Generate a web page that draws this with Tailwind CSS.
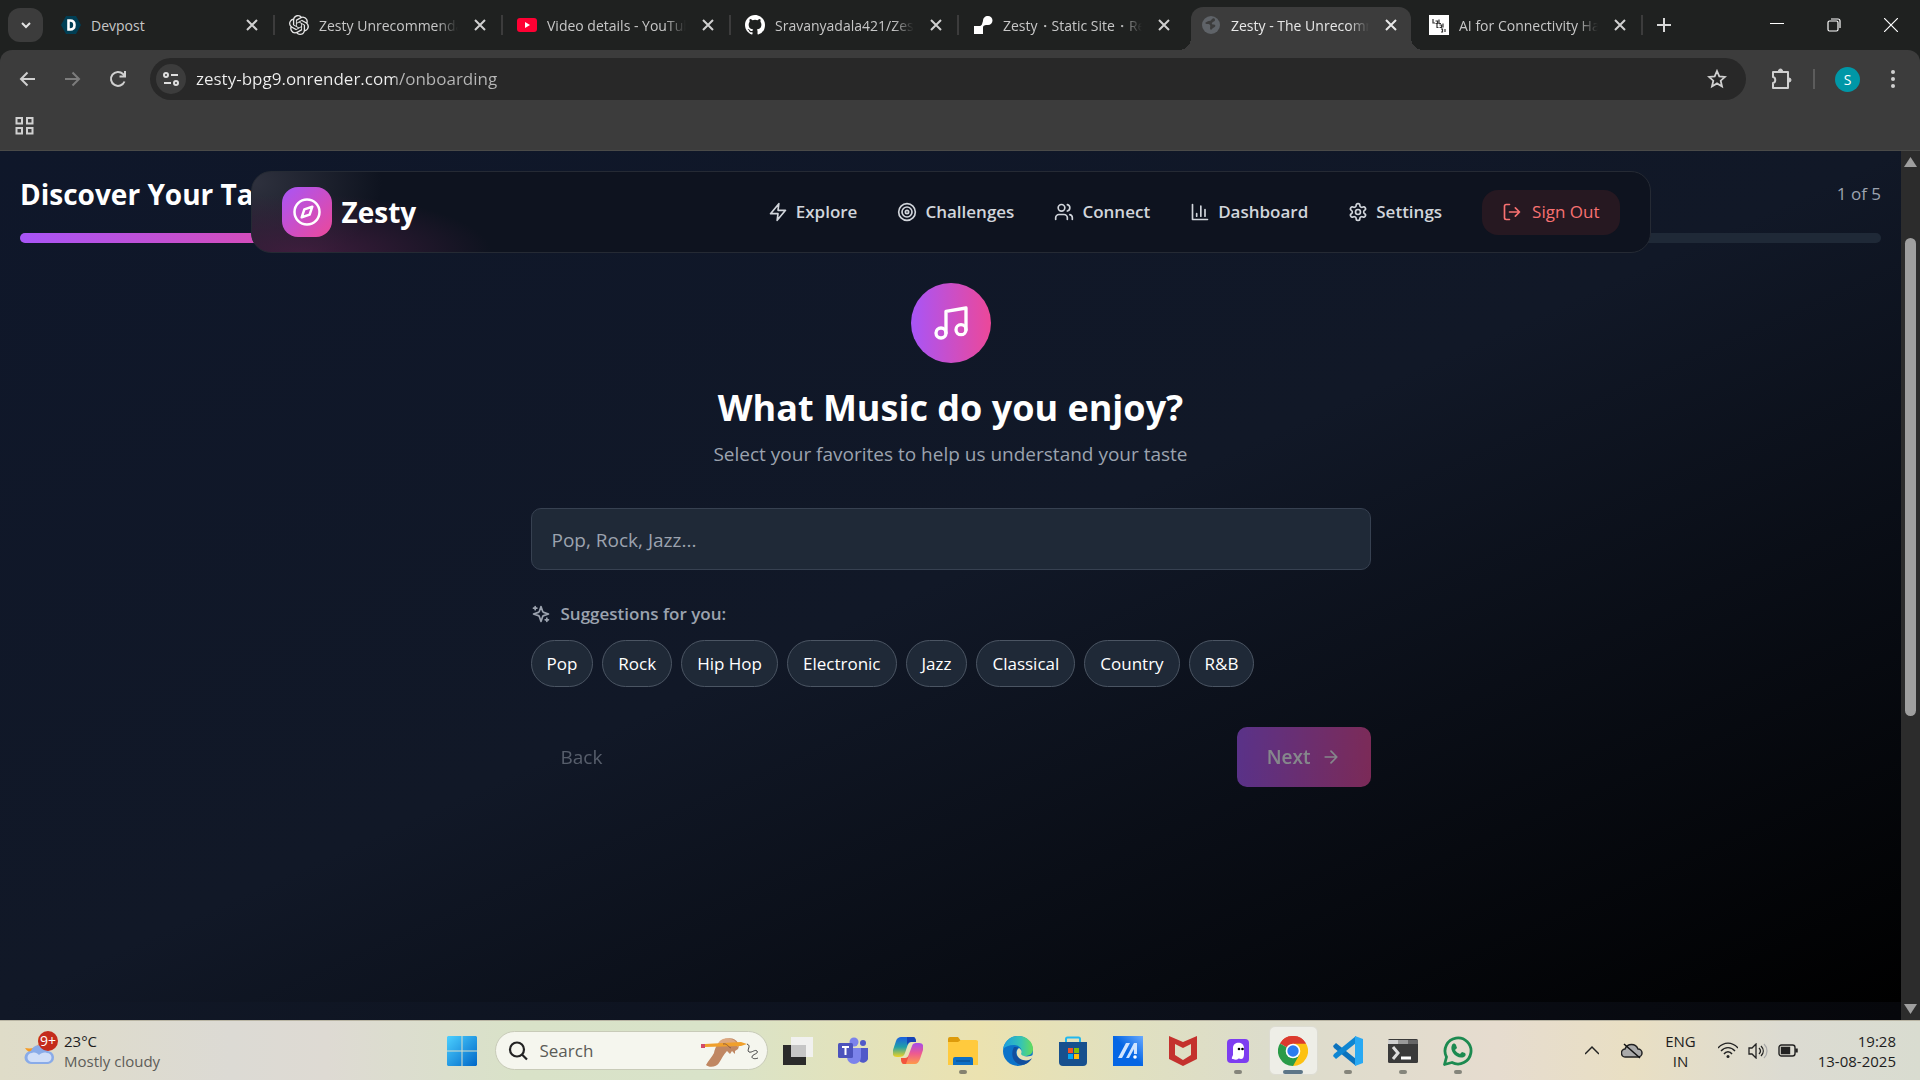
<!DOCTYPE html>
<html lang="en">
<head>
  <meta charset="UTF-8" />
  <meta name="viewport" content="width=device-width, initial-scale=1.0" />
  <title>Zesty - The Unrecommendation Engine</title>
  <script src="https://cdn.jsdelivr.net/npm/@tailwindcss/browser@4"></script>
</head>
<body class="min-h-screen flex flex-col bg-[#1f2120] font-['Open_Sans','Noto_Sans',sans-serif]">

  <!-- Tab strip -->
  <header class="flex h-[50px] shrink-0 items-center text-[14px] text-[#c7c7c7]">
    <button aria-label="Search tabs" class="ml-2 mr-1 grid h-[34px] w-[35px] shrink-0 place-items-center rounded-xl bg-[#3c3c3c]">
      <svg class="size-4" viewBox="0 0 16 16" fill="none" stroke="#e3e3e3" stroke-width="2"><path d="M4 6l4 4 4-4" /></svg>
    </button>

    <div class="grid h-full w-[1596px] min-w-0 shrink grid-cols-7 items-center">
      <div class="flex h-5 min-w-0 items-center border-r-2 border-[#3c3c3c] pl-[14px] pr-[15px]">
        <svg class="size-5 shrink-0" viewBox="0 0 20 20"><path d="M5 1h10l5 9-5 9H5L0 10z" fill="#003e54" /><path fill="none" stroke="#fff" stroke-width="2.6" d="M7.500 5.500v9h1.500c3 0 4.500-1.500 4.500-4.500S12 5.500 9 5.500z" /></svg>
        <span class="ml-[10px] flex-1 overflow-hidden whitespace-nowrap">Devpost</span>
        <button aria-label="Close Devpost" class="ml-4"><svg class="size-3" viewBox="0 0 12 12" stroke="#d0d0d0" stroke-width="2"><path d="M1 1l10 10M11 1L1 11" /></svg></button>
      </div>
      <div class="flex h-5 min-w-0 items-center border-r-2 border-[#3c3c3c] pl-[14px] pr-[15px]">
        <svg class="size-5 shrink-0" viewBox="0 0 24 24" fill="#e6e6e6"><path d="M22.280 9.820a5.980 5.980 0 0 0-.520-4.910 6.050 6.050 0 0 0-6.510-2.900A6.070 6.070 0 0 0 4.980 4.180a5.980 5.980 0 0 0-4 2.900 6.050 6.050 0 0 0 .740 7.100 5.980 5.980 0 0 0 .510 4.910 6.050 6.050 0 0 0 6.510 2.900A5.980 5.980 0 0 0 13.260 24a6.060 6.060 0 0 0 5.770-4.210 5.990 5.990 0 0 0 4-2.900 6.060 6.060 0 0 0-.750-7.070zm-9.020 12.610a4.480 4.480 0 0 1-2.880-1.040l.140-.080 4.780-2.760a.790.790 0 0 0 .390-.680v-6.740l2.020 1.170v5.620a4.500 4.500 0 0 1-4.450 4.510zm-9.660-4.130a4.470 4.470 0 0 1-.530-3.010l.140.080 4.780 2.760a.770.770 0 0 0 .780 0l5.840-3.370v2.370l-4.870 2.810a4.500 4.500 0 0 1-6.140-1.640zM2.340 7.900a4.480 4.480 0 0 1 2.370-1.980v5.680a.770.770 0 0 0 .390.680l5.810 3.350-2.020 1.170-4.830-2.790A4.500 4.500 0 0 1 2.340 7.900zm16.600 3.860l-5.830-3.390 2.010-1.160 4.830 2.790a4.490 4.490 0 0 1-.680 8.100v-5.680a.790.790 0 0 0-.330-.660zm2.010-3.020l-.140-.090-4.770-2.780a.780.780 0 0 0-.790 0L9.410 9.230V6.900l4.850-2.790a4.500 4.500 0 0 1 6.690 4.630zM8.310 12.860L6.290 11.700V6.070a4.500 4.500 0 0 1 7.380-3.450l-.140.080L8.750 5.460a.790.790 0 0 0-.390.680zm1.090-2.360L12 9l2.610 1.500v3L12 15l-2.610-1.500z" /></svg>
        <span class="ml-[10px] flex-1 overflow-hidden whitespace-nowrap mask-r-from-85% mask-r-to-100%">Zesty Unrecommendation</span>
        <button aria-label="Close Zesty Unrecommendation" class="ml-4"><svg class="size-3" viewBox="0 0 12 12" stroke="#d0d0d0" stroke-width="2"><path d="M1 1l10 10M11 1L1 11" /></svg></button>
      </div>
      <div class="flex h-5 min-w-0 items-center border-r-2 border-[#3c3c3c] pl-[14px] pr-[15px]">
        <svg class="size-5 shrink-0" viewBox="0 0 20 20"><rect y="3" width="20" height="14" rx="3" fill="#ff0033" /><path d="M8 7l5 3-5 3z" fill="#fff" /></svg>
        <span class="ml-[10px] flex-1 overflow-hidden whitespace-nowrap mask-r-from-85% mask-r-to-100%">Video details - YouTube</span>
        <button aria-label="Close Video details" class="ml-4"><svg class="size-3" viewBox="0 0 12 12" stroke="#d0d0d0" stroke-width="2"><path d="M1 1l10 10M11 1L1 11" /></svg></button>
      </div>
      <div class="flex h-5 min-w-0 items-center border-r-2 border-[#3c3c3c] pl-[14px] pr-[15px]">
        <svg class="size-5 shrink-0" viewBox="0 0 16 16" fill="#fff"><path d="M8 0C3.580 0 0 3.580 0 8c0 3.540 2.290 6.530 5.470 7.590.400.070.550-.170.550-.380v-1.490c-2.010.370-2.530-.490-2.690-.940-.090-.230-.480-.940-.820-1.130-.280-.150-.680-.520-.010-.530.630-.010 1.080.580 1.230.820.720 1.210 1.870.870 2.330.660.070-.520.280-.870.510-1.070-1.780-.200-3.640-.890-3.640-3.950 0-.870.310-1.590.820-2.150-.080-.200-.360-1.020.080-2.120 0 0 .670-.210 2.200.820a7.500 7.500 0 0 1 4 0c1.530-1.040 2.200-.820 2.200-.820.440 1.100.160 1.920.080 2.120.510.560.820 1.270.820 2.150 0 3.070-1.870 3.750-3.650 3.950.290.250.540.730.540 1.480v2.200c0 .210.150.460.550.380A8 8 0 0 0 16 8c0-4.420-3.580-8-8-8z" /></svg>
        <span class="ml-[10px] flex-1 overflow-hidden whitespace-nowrap mask-r-from-85% mask-r-to-100%">Sravanyadala421/Zesty</span>
        <button aria-label="Close Sravanyadala421" class="ml-4"><svg class="size-3" viewBox="0 0 12 12" stroke="#d0d0d0" stroke-width="2"><path d="M1 1l10 10M11 1L1 11" /></svg></button>
      </div>
      <div class="flex h-5 min-w-0 items-center pl-[14px] pr-[17px]">
        <svg class="size-5 shrink-0" viewBox="0 0 20 20" fill="#fff"><path d="M1 19V11h5c3 0 3-2 4-5 0-3 2-5 5-5a4 4 0 0 1 0 9c-3 0-5 0-5 3v6z" /></svg>
        <span class="ml-[10px] flex-1 overflow-hidden whitespace-nowrap mask-r-from-85% mask-r-to-100%">Zesty・Static Site・Render</span>
        <button aria-label="Close Zesty Static Site" class="ml-4"><svg class="size-3" viewBox="0 0 12 12" stroke="#d0d0d0" stroke-width="2"><path d="M1 1l10 10M11 1L1 11" /></svg></button>
      </div>
      <!-- Active tab -->
      <div class="relative mx-1 flex h-[43px] min-w-0 items-center self-end rounded-t-xl bg-[#3c3c3c] px-[10px] pb-[7px] text-[#e8e8e8]">
        <span class="absolute -left-3 bottom-0 size-3 bg-[radial-gradient(circle_at_0_0,transparent_12px,#3c3c3c_12px)]"></span>
        <span class="absolute -right-3 bottom-0 size-3 bg-[radial-gradient(circle_at_100%_0,transparent_12px,#3c3c3c_12px)]"></span>
        <svg class="size-5 shrink-0" viewBox="0 0 20 20"><circle cx="10" cy="10" r="9" fill="#5f6368" /><path d="M4 8c2 2 4 0 5 2s-1 3 1 5l2-2c2-1 3-2 2-3s-4 0-3-2 3-1 3-3-2-2-3-1-1 2-3 2-2 1-4 2z" fill="#3c3c3c" /></svg>
        <span class="ml-[10px] flex-1 overflow-hidden whitespace-nowrap mask-r-from-85% mask-r-to-100%">Zesty - The Unrecommendation</span>
        <button aria-label="Close Zesty" class="mr-1 ml-4"><svg class="size-3" viewBox="0 0 12 12" stroke="#e8e8e8" stroke-width="2"><path d="M1 1l10 10M11 1L1 11" /></svg></button>
      </div>
      <div class="flex h-5 min-w-0 items-center border-r-2 border-[#3c3c3c] pl-[14px] pr-[15px]">
        <svg class="size-5 shrink-0" viewBox="0 0 20 20"><path fill="#fff" d="M0 0h20v20H0z" /><path d="M4 4v4h2M6.500 6h2v2.500h-2M10 4.500v4h2M8 9v3.500h1.500M10.500 10h2v2.500h-2M14 8.500v4M12 14h1.500v3H12M16 14v3" stroke="#333" stroke-width="1.200" fill="none" /></svg>
        <span class="ml-[10px] flex-1 overflow-hidden whitespace-nowrap mask-r-from-85% mask-r-to-100%">AI for Connectivity Hackathon</span>
        <button aria-label="Close AI for Connectivity" class="ml-4"><svg class="size-3" viewBox="0 0 12 12" stroke="#d0d0d0" stroke-width="2"><path d="M1 1l10 10M11 1L1 11" /></svg></button>
      </div>
    </div>
    <button aria-label="New tab" class="ml-[14px] shrink-0"><svg class="size-[14px]" viewBox="0 0 14 14" stroke="#d8d8d8" stroke-width="2"><path d="M7 0v14M0 7h14" /></svg></button>

    <div class="ml-auto flex shrink-0 items-center gap-[43px] pr-[22px]">
      <button aria-label="Minimize"><svg class="size-[14px]" viewBox="0 0 14 14" stroke="#fff"><path d="M0 5.500h14" /></svg></button>
      <button aria-label="Restore"><svg class="size-[14px]" viewBox="0 0 14 14" fill="none" stroke="#fff" stroke-width="1.200"><rect x="1" y="3" width="10" height="10" rx="1.500" /><path d="M4 1h7a2 2 0 0 1 2 2v7" /></svg></button>
      <button aria-label="Close window"><svg class="size-[14px]" viewBox="0 0 14 14" stroke="#fff" stroke-width="1.200"><path d="M0 0l14 14M14 0L0 14" /></svg></button>
    </div>
  </header>

  <!-- Toolbar and bookmarks bar -->
  <div class="h-[101px] shrink-0 rounded-t-xl border-b border-[#4a4a48] bg-[#3c3c3c] pt-2">
    <div class="flex h-[42px] items-center">
      <div class="flex w-[150px] shrink-0 items-center gap-[25px] pl-[18px]">
        <button aria-label="Back"><svg class="size-5" viewBox="0 0 20 20" fill="none" stroke="#d0d0d0" stroke-width="2"><path d="M17 10H3M9.500 3.500L3 10l6.500 6.500" /></svg></button>
        <button aria-label="Forward"><svg class="size-5" viewBox="0 0 20 20" fill="none" stroke="#7c7c7c" stroke-width="2"><path d="M2 10h14M9.500 3.500L16 10l-6.500 6.500" /></svg></button>
        <button aria-label="Reload"><svg class="size-5" viewBox="0 0 20 20" fill="none" stroke="#d0d0d0" stroke-width="2"><path d="M16.500 12.500a7 7 0 1 1-1.500-7.500l2 2M17 2v5.500h-5.500" /></svg></button>
      </div>
      <div class="flex h-full min-w-0 flex-1 items-center rounded-full bg-[#282828] pl-[6px] pr-[19px]">
        <button aria-label="View site information" class="grid size-[30px] shrink-0 place-items-center rounded-full bg-[#3c3c3c]">
          <svg class="size-[18px]" viewBox="0 0 18 18" fill="none" stroke="#dedede" stroke-width="2"><circle cx="4" cy="5" r="2" /><path d="M9 5h7M2 13h7" /><circle cx="14" cy="13" r="2" /></svg>
        </button>
        <input aria-label="Address" type="text" value="zesty-bpg9.onrender.com/onboarding" class="ml-[10px] min-w-0 flex-1 bg-linear-to-r from-[#f0f0f0] from-[199px] to-[#b8b8b8] to-[199px] bg-clip-text text-[17px] text-transparent outline-none" />
        <button aria-label="Bookmark this tab"><svg class="size-5" viewBox="0 0 20 20" fill="none" stroke="#d0d0d0" stroke-width="1.800"><path d="M10 2l2.300 5.400 5.700.500-4.300 3.800 1.300 5.700-5-3-5 3 1.300-5.700L2 7.900l5.700-.500z" /></svg></button>
      </div>
      <div class="flex w-[174px] shrink-0 items-center pl-[23px]">
        <button aria-label="Extensions"><svg class="size-6" viewBox="0 0 24 24" fill="none" stroke="#d0d0d0" stroke-width="2"><path d="M4 5h15v16H4v-5c3-.500 3-5.500 0-6z" stroke-linejoin="round" /><path d="M9.500 4a2 2 0 0 1 4 0zM20 11a2 2 0 0 1 0 4z" fill="#d0d0d0" stroke-width="1" /></svg></button>
        <span class="ml-5 h-5 w-[2px] bg-[#5c5c5c]"></span>
        <button aria-label="Profile" class="ml-5 grid size-[25px] place-items-center rounded-full bg-[#0097a7] text-[14px] text-white">S</button>
        <button aria-label="Menu" class="ml-[23px]"><svg class="size-5" viewBox="0 0 20 20" fill="#d0d0d0"><circle cx="10" cy="3" r="2" /><circle cx="10" cy="10" r="2" /><circle cx="10" cy="17" r="2" /></svg></button>
      </div>
    </div>
    <button aria-label="Apps" class="mt-4 ml-[15px] block"><svg class="size-[19px]" viewBox="0 0 19 19" fill="none" stroke="#d0d0d0" stroke-width="2"><path d="M1.500 2h5.500v5.500H1.500zM12 2h5.500v5.500H12zM1.500 12h5.500v5.500H1.500zM12 12h5.500v5.500H12z" /></svg></button>
  </div>

  <!-- Page -->
  <div class="flex flex-1">
    <div class="relative flex min-w-0 flex-1 flex-col bg-linear-to-r/srgb from-[#111827] via-[#0d121e] to-[#06070b]">
      <main class="flex-1 bg-linear-to-br/srgb from-[#0f172a] via-[#111827] to-black px-5 pt-[23px] pb-[215px]">
        <div class="flex h-10 items-center justify-between">
          <h2 class="text-[28px] font-bold text-white">Discover Your Taste</h2>
          <span class="text-[17px] text-[#9ca3af]">1 of 5</span>
        </div>
        <div class="mt-[19px] h-[10px] rounded-full bg-[#1f2937]">
          <div class="h-full rounded-full bg-linear-to-r/srgb from-[#a855f7] to-[#ec4899]" style="width: 20%"></div>
        </div>

        <section class="mx-auto mt-10 max-w-[840px]">
          <div class="mx-auto grid size-20 place-items-center rounded-full bg-linear-to-r/srgb from-[#a855f7] to-[#ec4899]">
            <svg class="size-10" viewBox="0 0 24 24" fill="none" stroke="#fff" stroke-width="2" stroke-linecap="round" stroke-linejoin="round"><path d="M9 18V5l12-2v13" /><circle cx="6" cy="18" r="3" /><circle cx="18" cy="16" r="3" /></svg>
          </div>
          <h1 class="mt-[22px] text-center text-[36px] leading-[46px] font-bold text-white">What Music do you enjoy?</h1>
          <p class="mt-2 text-center text-[19px] leading-[30px] text-[#9ca3af]">Select your favorites to help us understand your taste</p>

          <input aria-label="Music you enjoy" type="text" placeholder="Pop, Rock, Jazz..." class="mt-[39px] block h-[62px] w-full rounded-[10px] border border-[#374151] bg-[#1f2937] px-5 pt-[2px] text-[19px] text-white placeholder:text-[#9ca3af]" />

          <div class="mt-[31px] flex items-center gap-[10px] text-[#9ca3af]">
            <svg class="size-5" viewBox="0 0 24 24" fill="none" stroke="currentColor" stroke-width="2" stroke-linecap="round" stroke-linejoin="round"><path d="m12 3-1.912 5.813a2 2 0 0 1-1.275 1.275L3 12l5.813 1.912a2 2 0 0 1 1.275 1.275L12 21l1.912-5.813a2 2 0 0 1 1.275-1.275L21 12l-5.813-1.912a2 2 0 0 1-1.275-1.275L12 3Z" /><path d="M5 3v4M19 17v4M3 5h4M17 19h4" /></svg>
            <span class="text-[17px] leading-[26px] font-semibold">Suggestions for you:</span>
          </div>
          <div class="mt-[13px] flex flex-wrap gap-[9px] text-[17px] text-white">
            <button class="h-[47px] rounded-full border border-[#4b5563] bg-[#1f2937] px-[15px]">Pop</button>
            <button class="h-[47px] rounded-full border border-[#4b5563] bg-[#1f2937] px-[15px]">Rock</button>
            <button class="h-[47px] rounded-full border border-[#4b5563] bg-[#1f2937] px-[15px]">Hip Hop</button>
            <button class="h-[47px] rounded-full border border-[#4b5563] bg-[#1f2937] px-[15px]">Electronic</button>
            <button class="h-[47px] rounded-full border border-[#4b5563] bg-[#1f2937] px-[15px]">Jazz</button>
            <button class="h-[47px] rounded-full border border-[#4b5563] bg-[#1f2937] px-[15px]">Classical</button>
            <button class="h-[47px] rounded-full border border-[#4b5563] bg-[#1f2937] px-[15px]">Country</button>
            <button class="h-[47px] rounded-full border border-[#4b5563] bg-[#1f2937] px-[15px]">R&amp;B</button>
          </div>

          <div class="mt-10 flex h-[60px] items-center justify-between text-[19px]">
            <button disabled class="px-[30px] text-[#9ca3af] opacity-50">Back</button>
            <button disabled class="flex h-full items-center gap-[10px] rounded-[10px] bg-linear-to-r/srgb from-[#a855f7] to-[#ec4899] px-[30px] font-semibold text-white opacity-50">
              Next
              <svg class="size-5" viewBox="0 0 24 24" fill="none" stroke="currentColor" stroke-width="2" stroke-linecap="round" stroke-linejoin="round"><path d="M5 12h14M12 5l7 7-7 7" /></svg>
            </button>
          </div>
        </section>
      </main>
      <div class="h-[18px]"></div>

      <nav class="absolute inset-x-0 top-5 mx-auto flex h-[82px] max-w-[1400px] items-center justify-between rounded-[20px] border border-[#252a34] bg-[#0e131f] bg-[radial-gradient(ellipse_190px_60px_at_50px_82px,#4a1f44cc,transparent),radial-gradient(ellipse_130px_90px_at_0_10px,#373946cc,transparent)] px-[30px] text-[17px] font-semibold text-[#d1d5db]">
        <a href="#" class="flex items-center gap-[10px] text-[28px] font-bold text-white">
          <span class="grid size-[50px] place-items-center rounded-2xl bg-linear-to-br/srgb from-[#a855f7] to-[#ec4899]">
            <svg class="size-[30px]" viewBox="0 0 24 24" fill="none" stroke="#fff" stroke-width="2" stroke-linecap="round" stroke-linejoin="round"><circle cx="12" cy="12" r="10" /><path d="M16.240 7.760l-2.120 6.360-6.360 2.120 2.120-6.360z" /></svg>
          </span>
          Zesty
        </a>
        <div class="flex items-center gap-10">
          <a href="#" class="flex items-center gap-2">
            <svg class="size-5" viewBox="0 0 24 24" fill="none" stroke="currentColor" stroke-width="2" stroke-linecap="round" stroke-linejoin="round"><path d="M13 2L3 14h9l-1 8 10-12h-9z" /></svg>
            Explore
          </a>
          <a href="#" class="flex items-center gap-2">
            <svg class="size-5" viewBox="0 0 24 24" fill="none" stroke="currentColor" stroke-width="2"><circle cx="12" cy="12" r="10" /><circle cx="12" cy="12" r="6" /><circle cx="12" cy="12" r="2" /></svg>
            Challenges
          </a>
          <a href="#" class="flex items-center gap-2">
            <svg class="size-5" viewBox="0 0 24 24" fill="none" stroke="currentColor" stroke-width="2" stroke-linecap="round" stroke-linejoin="round"><path d="M16 21v-2a4 4 0 0 0-4-4H6a4 4 0 0 0-4 4v2" /><circle cx="9" cy="7" r="4" /><path d="M22 21v-2a4 4 0 0 0-3-3.870M16 3.130a4 4 0 0 1 0 7.750" /></svg>
            Connect
          </a>
          <a href="#" class="flex items-center gap-2">
            <svg class="size-5" viewBox="0 0 24 24" fill="none" stroke="currentColor" stroke-width="2" stroke-linecap="round" stroke-linejoin="round"><path d="M3 3v18h18M18 17V9M13 17V5M8 17v-3" /></svg>
            Dashboard
          </a>
          <a href="#" class="flex items-center gap-2">
            <svg class="size-5" viewBox="0 0 24 24" fill="none" stroke="currentColor" stroke-width="2" stroke-linecap="round" stroke-linejoin="round"><path d="M12.220 2h-.440a2 2 0 0 0-2 2v.180a2 2 0 0 1-1 1.730l-.430.250a2 2 0 0 1-2 0l-.150-.080a2 2 0 0 0-2.730.730l-.220.380a2 2 0 0 0 .730 2.730l.150.100a2 2 0 0 1 1 1.720v.510a2 2 0 0 1-1 1.740l-.150.090a2 2 0 0 0-.730 2.730l.220.380a2 2 0 0 0 2.730.730l.150-.080a2 2 0 0 1 2 0l.430.250a2 2 0 0 1 1 1.730V20a2 2 0 0 0 2 2h.440a2 2 0 0 0 2-2v-.180a2 2 0 0 1 1-1.730l.430-.250a2 2 0 0 1 2 0l.150.080a2 2 0 0 0 2.730-.730l.220-.390a2 2 0 0 0-.730-2.730l-.150-.080a2 2 0 0 1-1-1.740v-.500a2 2 0 0 1 1-1.740l.150-.090a2 2 0 0 0 .730-2.730l-.220-.380a2 2 0 0 0-2.730-.730l-.150.080a2 2 0 0 1-2 0l-.430-.250a2 2 0 0 1-1-1.730V4a2 2 0 0 0-2-2z" /><circle cx="12" cy="12" r="3" /></svg>
            Settings
          </a>
          <button class="flex h-[45px] items-center gap-[10px] rounded-2xl bg-[#261821] px-5 font-normal text-[#f87171]">
            <svg class="size-5" viewBox="0 0 24 24" fill="none" stroke="currentColor" stroke-width="2" stroke-linecap="round" stroke-linejoin="round"><path d="M9 21H5a2 2 0 0 1-2-2V5a2 2 0 0 1 2-2h4M16 17l5-5-5-5M21 12H9" /></svg>
            Sign Out
          </button>
        </div>
      </nav>
    </div>

    <!-- Scrollbar -->
    <div class="flex w-[19px] shrink-0 flex-col items-center bg-[#2c2c2c] py-[6px]">
      <svg class="h-[10px] w-[13px]" viewBox="0 0 13 10" fill="#9f9f9f"><path d="M6.500 0L13 10H0z" /></svg>
      <div class="mt-[71px] h-[478px] w-[11px] rounded-full bg-[#9f9f9f]"></div>
      <svg class="mt-auto h-[10px] w-[13px]" viewBox="0 0 13 10" fill="#9f9f9f"><path d="M0 0h13L6.500 10z" /></svg>
    </div>
  </div>

  <!-- Taskbar -->
  <footer class="grid h-[60px] shrink-0 grid-cols-[1fr_auto_1fr] items-center border-t border-[#b9b5a4] bg-[linear-gradient(90deg,#dfdcc8_0%,#dcdad4_12%,#dedad3_17%,#d9e2c8_27%,#d9e3c9_37%,#ebe2b0_51%,#e0e0c0_59%,#dcdccb_66%,#e6dccf_78%,#e9dfc3_85%,#dcdbd2_93%,#d9dcd0_100%)] text-[15px] leading-5 text-[#1d1d1d]">
    <div class="flex items-center gap-2 pl-6">
      <div class="relative size-8">
        <svg class="size-8" viewBox="0 0 32 32"><path d="M14 1c4 9-3 14-13 12 3 5 8 6 14 3z" fill="#f59a23" /><path d="M7 29a6.500 6.500 0 0 1 0-13 8.500 8.500 0 0 1 16 0 6.500 6.500 0 0 1 1 13z" fill="#89abe8" /><path d="M8 27a4.500 4.500 0 0 1 0-9c3-1 5 0 7 2 2-2 5-3 8-2a4.500 4.500 0 0 1 0 9z" fill="#d0def8" /></svg>
        <span class="absolute -top-1 left-[14px] grid size-5 place-items-center rounded-full bg-[#c42b1c] text-[14px] text-white">9+</span>
      </div>
      <div>
        <div>23°C</div>
        <div class="text-[#5d5d58]">Mostly cloudy</div>
      </div>
    </div>

    <div class="flex h-full items-center">
      <button aria-label="Start" class="grid w-[54px] place-items-center">
        <svg class="size-[30px]" viewBox="0 0 30 30"><defs><linearGradient id="win" x2="1" y2="1"><stop stop-color="#4cd0ff" /><stop offset="1" stop-color="#0067c8" /></linearGradient></defs><path d="M1 0h13.500v14.500H0V1zM15.500 0H29l1 1v13.500H15.500zM0 15.500h14.500V30H1l-1-1zM15.500 15.500H30V29l-1 1H15.500z" fill="url(#win)" /></svg>
      </button>
      <label class="ml-[6px] mr-[3px] flex h-[39px] w-[273px] items-center rounded-full border border-[#c8cbb8] bg-[#f5f6ee] pl-3 pr-2">
        <svg class="size-5 shrink-0" viewBox="0 0 20 20" fill="none" stroke="#222" stroke-width="2.200"><circle cx="9" cy="8.500" r="7" /><path d="M14 13.500l5 5" /></svg>
        <input aria-label="Search" type="text" placeholder="Search" class="ml-3 w-0 flex-1 bg-transparent text-[17px] outline-none placeholder:text-[#5b5b57]" />
        <svg class="h-[32px] w-[58px] shrink-0" viewBox="0 0 58 32"><path d="M5 30c2-4 6-8 8-12 1-6 5-13 11-14 6-2 11 0 13 4 1 2 1 4 0 6l-3 2 0 3-3-3-2 3-3-3c-3 3-5 7-8 12-2 4-10 5-13 2z" fill="#c08762" /><path d="M17 9c2-5 8-7 13-5 4 1 7 4 7 8l-4-3-4 2-5-3z" fill="#dda981" /><path d="M4 9l36-2 6 2-6 2-36 1z" fill="#f0a02c" /><path d="M0 9h4v4H0z" fill="#d24b68" /><path d="M22 9c4-1 5 3 8 4" stroke="#8f5b3d" fill="none" /><path d="M46 9c5 2-1 6 2 8 3 1 6-3 8-1 2 3-5 3-5 6 0 2 4 2 6 1" fill="none" stroke="#444" /></svg>
      </label>

      <button aria-label="Task view" class="grid w-[55px] place-items-center"><svg class="size-[30px]" viewBox="0 0 30 30"><path d="M0 9h23v20H0z" fill="#2b2b2b" /><path d="M8 1h22v20H8z" fill="#f1f1ef" /><path d="M8 9h15v12H8z" fill="#c6c6c6" /></svg></button>
      <button aria-label="Teams" class="grid w-[55px] place-items-center"><svg class="size-[30px]" viewBox="0 0 30 30"><circle cx="16" cy="6" r="4.500" fill="#7b83eb" /><circle cx="25" cy="7" r="3" fill="#5059c9" /><path d="M20 12h10v8a5 5 0 0 1-10 3z" fill="#5059c9" /><path d="M9 12h14v9a7 7 0 0 1-14 0z" fill="#7b83eb" /><rect y="7" width="15" height="15" rx="1.500" fill="#4b53bc" /><path d="M4 11h7M7.500 11v8" stroke="#fff" stroke-width="2" /></svg></button>
      <button aria-label="Copilot" class="grid w-[55px] place-items-center"><svg class="size-[30px]" viewBox="0 0 30 30"><defs><linearGradient id="cpa" x2="0" y2="1"><stop stop-color="#1b5fe0" /><stop offset=".5" stop-color="#21a0a8" /><stop offset="1" stop-color="#f2d322" /></linearGradient><linearGradient id="cpb" x2="0" y2="1"><stop stop-color="#a54bea" /><stop offset=".5" stop-color="#ee5a90" /><stop offset="1" stop-color="#ff9a4a" /></linearGradient></defs><path d="M8 1h12c2 0 3 2 3 5h-5c-2 0-3 2-4 5l-2 6c-1 3-3 4-6 4H4c-4 0-5-3-4-7L3 5c1-3 3-4 5-4z" fill="url(#cpa)" /><path d="M14 1h6c2 0 3 2 3 5h-5c-2 0-3 1-4 3z" fill="#1743b5" /><path d="M22 28H11c-2 0-3-2-3-6h4c2 0 3-1 4-4l3-8c1-3 3-3 5-3h2c4 0 5 3 4 7l-3 9c-1 3-3 5-5 5z" fill="url(#cpb)" /><path d="M8 22h5c1 0 2-1 3-3l-3 9h-2c-2 0-3-2-3-6z" fill="#f2543c" /></svg></button>
      <button aria-label="File Explorer" class="relative grid h-full w-[55px] place-items-center"><svg class="size-[30px]" viewBox="0 0 30 30"><path d="M0 3a2 2 0 0 1 2-2h8l3 4h15a2 2 0 0 1 2 2H0z" fill="#dd9b0b" /><path d="M0 6h10l3-2h15a2 2 0 0 1 2 2v23H0z" fill="#ffca3d" /><path d="M5 29v-6a2 2 0 0 1 2-2h16a2 2 0 0 1 2 2v6z" fill="#0e6fc4" /><path d="M8 25h14" stroke="#0a4a86" /></svg><span class="absolute bottom-[6px] h-1 w-2 rounded-full bg-[#85826f]"></span></button>
      <button aria-label="Edge" class="grid w-[55px] place-items-center"><svg class="size-[30px]" viewBox="0 0 30 30"><defs><linearGradient id="edg"><stop stop-color="#1c9de0" /><stop offset=".6" stop-color="#36c4b4" /><stop offset="1" stop-color="#66dd58" /></linearGradient></defs><circle cx="15" cy="15" r="15" fill="#0c73c9" /><path d="M0 13C2 4 8 0 15 0c9 0 15 6 15 13 0 5-4 7-8 7-3 0-5-1-4-3 2-4-2-8-7-8S2 11 0 13z" fill="url(#edg)" /><path d="M11 11c-4 8-1 16 7 18 5 0 9-3 11-7-5 3-15 2-16-5 0-3 1-5 3-5-2-1-4-1-5-1z" fill="#124f9e" /><path d="M16 12c-4 3-3 10 4 12 4 1 7 0 9-2l1-3c-3 2-11 2-12-1 1-2 1-4-2-6z" fill="#e6e1b6" /></svg></button>
      <button aria-label="Microsoft Store" class="grid w-[55px] place-items-center"><svg class="size-[30px]" viewBox="0 0 30 30"><path d="M8 7V3a1.500 1.500 0 0 1 1.500-1.500h11A1.500 1.500 0 0 1 22 3v4" stroke="#22b8ee" stroke-width="2" fill="none" /><path d="M1 6h28v20a4 4 0 0 1-4 4H5a4 4 0 0 1-4-4z" fill="#17508e" /><path d="M10 12h5v5h-5z" fill="#f35325" /><path d="M16 12h5v5h-5z" fill="#81bc06" /><path d="M10 18h5v5h-5z" fill="#05a6f0" /><path d="M16 18h5v5h-5z" fill="#ffba08" /></svg></button>
      <button aria-label="MyASUS" class="grid w-[55px] place-items-center"><svg class="size-[30px]" viewBox="0 0 30 30"><defs><linearGradient id="asu" x1="0" y1="1" x2="1" y2="0"><stop offset=".5" stop-color="#0566e4" /><stop offset="1" stop-color="#69aaff" /></linearGradient></defs><path d="M0 0h30v30H0z" fill="url(#asu)" /><path d="M5 22l8-15h4L9 22zM13 22l8-15h3v11h-3v-5l-5 9z" fill="#cfe4ff" /><circle cx="22" cy="21" r="1.800" fill="#fff" /></svg></button>
      <button aria-label="McAfee" class="grid w-[55px] place-items-center"><svg class="size-[30px]" viewBox="0 0 30 30"><path d="M1 0l14 6 14-6v23l-14 7-14-7zM7 8v11l8 5 8-5V8l-8 4z" fill="#c4312d" fill-rule="evenodd" /></svg></button>
      <button aria-label="Ghost" class="relative grid h-full w-[55px] place-items-center"><svg class="size-6" viewBox="0 0 24 24"><rect x="1" width="22" height="24" rx="4" fill="#7d3df0" /><path d="M7 20c-2 0-1-2 0-4V9c0-7 11-7 11 0v6c0 3-1 5-3 5-1 0-2-1-3 0s-3 1-5 0z" fill="#fff" /><circle cx="13" cy="10" r="1.300" /><circle cx="16.500" cy="10" r="1.300" /></svg><span class="absolute bottom-[6px] h-1 w-2 rounded-full bg-[#85857b]"></span></button>
      <button aria-label="Chrome" class="relative grid h-full w-[55px] place-items-center"><span class="absolute inset-x-[3px] inset-y-[5px] rounded-md border border-[#dddcd2] bg-[#eeeee7]"></span><svg class="relative size-[30px]" viewBox="0 0 30 30"><path d="M15 15L2 7.500A15 15 0 0 1 28 7.500z" fill="#dc3a2e" /><path d="M15 15V7.500h13A15 15 0 0 1 15 30z" fill="#fdc111" /><path d="M15 15l6.500 3.500L15 30A15 15 0 0 1 2 7.500z" fill="#2a9b48" /><path d="M2 7.500A15 15 0 0 1 28 7.500H15z" fill="#dc3a2e" /><circle cx="15" cy="15" r="7.300" fill="#fff" /><circle cx="15" cy="15" r="5.700" fill="#2a7cf0" /></svg><span class="absolute bottom-[6px] h-1 w-5 rounded-full bg-[#5d7688]"></span></button>
      <button aria-label="Visual Studio Code" class="relative grid h-full w-[55px] place-items-center"><svg class="size-[30px]" viewBox="0 0 30 30"><path d="M0 10l3-3 20 16v7L1 12z" fill="#0b72bd" /><path d="M0 20l3 3L23 7V0L1 18z" fill="#0f86d2" /><path d="M22 0l8 3v24l-8 3z" fill="#29a9f3" /></svg><span class="absolute bottom-[6px] h-1 w-2 rounded-full bg-[#85857b]"></span></button>
      <button aria-label="Terminal" class="relative grid h-full w-[55px] place-items-center"><svg class="size-[30px]" viewBox="0 0 30 30"><rect y="3" width="30" height="24" rx="1.500" fill="#3a3a3a" /><path d="M0 4h10v4H0z" fill="#cfcfcf" /><path d="M10 4h10v4H10z" fill="#999" /><path d="M20 4h10v4H20z" fill="#666" /><path d="M5 11l5 6-5 6" stroke="#ddd" stroke-width="3" fill="none" /><path d="M13 22h10" stroke="#fff" stroke-width="3" /></svg><span class="absolute bottom-[6px] h-1 w-2 rounded-full bg-[#85857b]"></span></button>
      <button aria-label="WhatsApp" class="relative grid h-full w-[55px] place-items-center"><svg class="size-[30px]" viewBox="0 0 30 30"><path d="M1.500 28.500L3.500 21A13 13 0 1 1 9 26.500z" fill="none" stroke="#1c8a50" stroke-width="2.800" stroke-linejoin="round" /><path d="M9 9c1-2 3-2 4 0l1 3-2 2c1 2 3 3 5 4l2-2 3 1c1 1 1 3-1 4-7 3-15-6-12-12z" fill="#1c8a50" /></svg><span class="absolute bottom-[6px] h-1 w-2 rounded-full bg-[#85857b]"></span></button>
    </div>

    <div class="flex items-center justify-end pr-6">
      <button aria-label="Show hidden icons"><svg class="size-[14px]" viewBox="0 0 14 14" fill="none" stroke="#222" stroke-width="1.500"><path d="M0 10l7-7 7 7" /></svg></button>
      <svg class="ml-[22px] h-4 w-[22px]" viewBox="0 0 22 16"><path d="M5 14a4 4 0 0 1-1-8 7 7 0 0 1 13 0 4 4 0 0 1 0 8z" fill="#aaa" stroke="#222" stroke-width="1.500" /><path d="M3 1l16 14" stroke="#111" stroke-width="1.500" /></svg>
      <button class="ml-[22px] text-center">ENG<br />IN</button>
      <svg class="ml-[22px] h-[17px] w-5" viewBox="0 0 20 17" fill="none" stroke="#222" stroke-width="1.400"><path d="M0 6c6-6.500 14-6.500 20 0M3 9c4-4.500 10-4.500 14 0M6 12c2-3 6-3 8 0" /><circle cx="10" cy="14.500" r="1.500" fill="#222" stroke="none" /></svg>
      <svg class="ml-[10px] h-4 w-5" viewBox="0 0 20 16" fill="none" stroke="#222" stroke-width="1.300"><path d="M1 5v6h3l4 4V1L4 5zM11 5c2 2 2 4 0 6M13 3c3 3 3 7 0 10" /><path d="M16 1c4 4 4 10 0 14" stroke="#aaa" /></svg>
      <svg class="ml-[10px] h-[13px] w-5" viewBox="0 0 20 13" fill="none" stroke="#222" stroke-width="1.400"><rect x="1" y="1" width="16" height="11" rx="2.500" /><path d="M3.500 3.500h8v6h-8z" fill="#222" /><path d="M18.500 4.500v4" stroke-width="2.500" /></svg>
      <div class="ml-5 text-right">19:28<br />13-08-2025</div>
    </div>
  </footer>
</body>
</html>
